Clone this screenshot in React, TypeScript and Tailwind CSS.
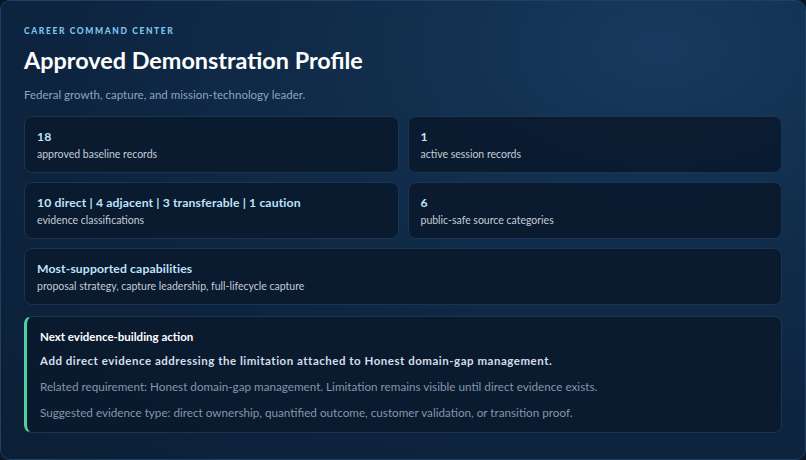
export default function App() {
  const f = { fontFamily: "Lato, 'Noto Sans', sans-serif" };
  const Card = ({ v, l, span }: { v: string; l: string; span?: boolean }) => (
    <div className={`h-[57px] rounded-lg border border-[#1c3352] bg-[#0a1a2e]/90 px-3 pt-[12px] ${span ? "col-span-2" : ""}`}>
      <div className="text-[12.2px] font-bold leading-[16px] tracking-[0.01em] text-[#bfe3fb]">{v}</div>
      <div className="mt-[2px] text-[10.5px] leading-[14px] text-[#c3ccd8]">{l}</div>
    </div>
  );
  return (
    <div style={f} className="h-[460px] w-[806px] bg-[#0b1726]">
      <div className="h-[460px] w-[806px] rounded-[10px] border border-[#1f3f63] bg-[radial-gradient(ellipse_at_82%_10%,#173a5e_0%,#112e4c_30%,#0d2440_65%,#0c1f36_100%)] px-[23px] pt-[24px]">
        <div className="text-[8.5px] font-black leading-[12px] tracking-[0.19em] text-[#7fc6ee]">CAREER COMMAND CENTER</div>
        <div className="mt-[8px] text-[23.4px] font-bold leading-[30px] text-white">Approved Demonstration Profile</div>
        <div className="mt-[12px] text-[11.5px] leading-[16px] text-[#8ea4bb]">Federal growth, capture, and mission-technology leader.</div>
        <div className="mt-[13px] grid grid-cols-2 gap-[9px]">
          <Card v="18" l="approved baseline records" />
          <Card v="1" l="active session records" />
          <Card v="10 direct | 4 adjacent | 3 transferable | 1 caution" l="evidence classifications" />
          <Card v="6" l="public-safe source categories" />
          <Card v="Most-supported capabilities" l="proposal strategy, capture leadership, full-lifecycle capture" span />
        </div>
        <div className="mt-[11px] h-[117px] rounded-lg border border-[#1c3352] border-l-[3px] border-l-[#4fd1a0] bg-[#0a1a2e]/90 pl-[13px] pt-[12px]">
          <div className="text-[11.5px] font-bold leading-[16px] text-white">Next evidence-building action</div>
          <div className="mt-[8px] text-[11.5px] font-bold leading-[16px] tracking-[0.045em] text-[#d6dee8]">Add direct evidence addressing the limitation attached to Honest domain-gap management.</div>
          <div className="mt-[9px] text-[11.7px] leading-[16px] text-[#8596ab]">Related requirement: Honest domain-gap management. Limitation remains visible until direct evidence exists.</div>
          <div className="mt-[10px] text-[11.7px] leading-[16px] text-[#8596ab]">Suggested evidence type: direct ownership, quantified outcome, customer validation, or transition proof.</div>
        </div>
      </div>
    </div>
  );
}
